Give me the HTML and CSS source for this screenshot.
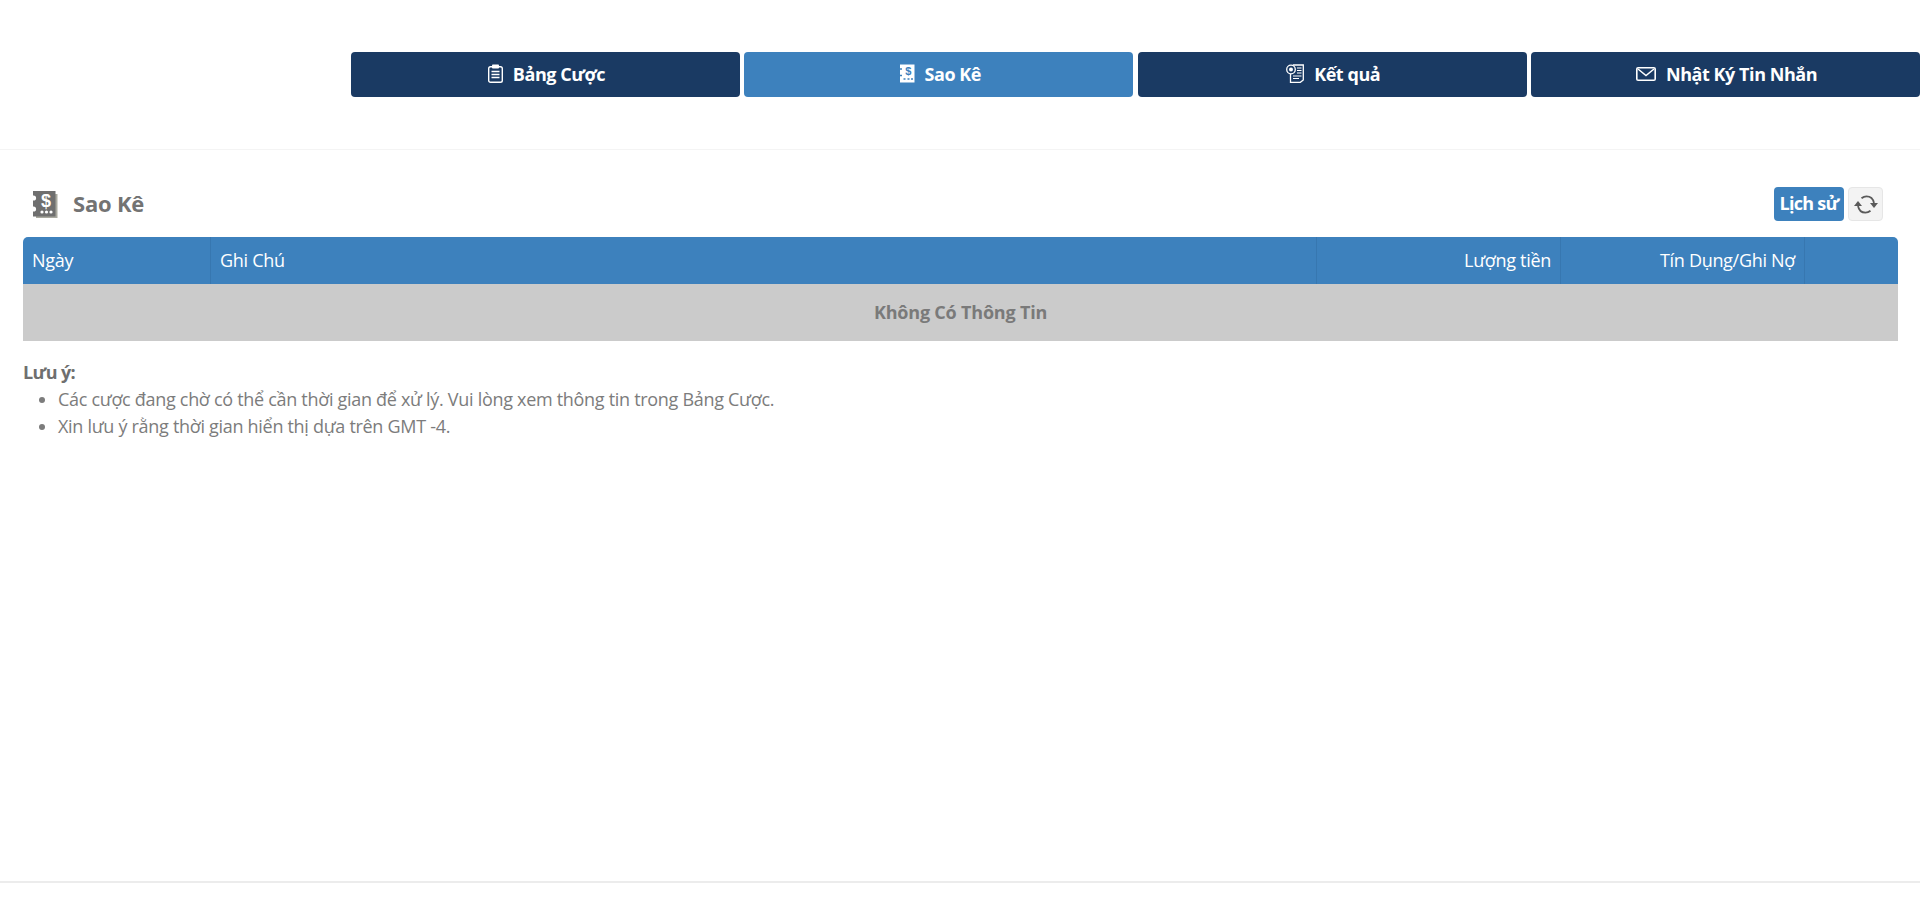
FILE: index.html
```html
<!DOCTYPE html>
<html lang="vi">
<head>
<meta charset="utf-8">
<title>Sao Kê</title>
<link rel="stylesheet" href="styles.css">
</head>
<body>
<header class="topbar">
  <nav class="tabs">
    <a class="tab"><svg class="tab-icon icon-board" viewBox="0 0 15 19"><rect x="0.700" y="2.700" width="13.600" height="15.600" rx="1.800" fill="none" stroke="#fff" stroke-width="1.400"/><rect x="4" y="0.500" width="7" height="4" rx="0.800" fill="#fff"/><path d="M3.500 7.500h8M3.500 10.500h8M3.500 13.500h8" stroke="#fff" stroke-width="1.500"/></svg>Bảng Cược</a>
    <a class="tab active"><svg class="tab-icon icon-statement" viewBox="0 0 16 19"><path d="M1 0.500h14.500v18H1z" fill="#fff"/><path d="M0 5h3M0 11.500h3" stroke="#3d81bd" stroke-width="1.500"/><text x="9" y="11" class="sym sym-blue">$</text><path d="M4.500 15h2M8.500 15h2M12 15h2" stroke="#3d81bd" stroke-width="1.500"/></svg>Sao Kê</a>
    <a class="tab"><svg class="tab-icon icon-result" viewBox="0 0 18 19"><path d="M7 1h10.300v15l-3 2.300H4.500V10" fill="none" stroke="#fff" stroke-width="1.300"/><circle cx="5" cy="5.500" r="4.300" fill="#1a3a63" stroke="#fff" stroke-width="1.300"/><circle cx="5" cy="5.500" r="2" fill="#fff"/><path d="M11 4h4.500M11 6.500h4.500M11 9h4.500M7 12h8.500M7 14.500h6" stroke="#fff" stroke-width="1.200"/></svg>Kết quả</a>
    <a class="tab"><svg class="tab-icon icon-mail" viewBox="0 0 20 14"><rect x="0.800" y="0.800" width="18.400" height="12.400" rx="1.300" fill="none" stroke="#fff" stroke-width="1.600"/><path d="M2 2l8 6.500L18 2" fill="none" stroke="#fff" stroke-width="1.500"/></svg>Nhật Ký Tin Nhắn</a>
  </nav>
</header>
<main class="content">
  <div class="title-row">
    <h1 class="title"><svg class="title-icon" viewBox="0 0 25 27"><path d="M22 3h2.500v24H3v-2h19z" fill="#a9a99f"/><rect width="22.500" height="25.500" fill="#6f6f6f"/><circle cx="0.500" cy="7" r="2.600" fill="#fff"/><circle cx="0.500" cy="18" r="2.600" fill="#fff"/><text x="13" y="16" class="sym sym-white">$</text><circle cx="9" cy="21" r="1.600" fill="#fff"/><circle cx="13.500" cy="21" r="1.600" fill="#fff"/><circle cx="18" cy="21" r="1.600" fill="#fff"/></svg><span class="title-text">Sao Kê</span></h1>
    <div class="actions">
      <button class="btn-history">Lịch sử</button>
      <button class="btn-refresh" aria-label="Làm mới"><svg viewBox="0 0 24 19" class="refresh-icon"><path d="M7.500 3.200C9 2 10.700 1.300 12.500 1.300c3.800 0 6.700 2.700 7.500 6.700" fill="none" stroke="#5a5a5a" stroke-width="1.800"/><path d="M16 8h8l-4 5z" fill="#5a5a5a"/><path d="M16.500 15.800C15 17 13.300 17.700 11.500 17.700c-3.800 0-6.700-2.700-7.500-6.700" fill="none" stroke="#5a5a5a" stroke-width="1.800"/><path d="M0 11h8L4 6z" fill="#5a5a5a"/></svg></button>
    </div>
  </div>
  <table class="statement">
    <thead>
      <tr>
        <th class="col-date">Ngày</th>
        <th class="col-note">Ghi Chú</th>
        <th class="col-amount num">Lượng tiền</th>
        <th class="col-credit num">Tín Dụng/Ghi Nợ</th>
        <th class="col-end"></th>
      </tr>
    </thead>
    <tbody>
      <tr><td class="empty" colspan="5">Không Có Thông Tin</td></tr>
    </tbody>
  </table>
  <section class="notes">
    <strong class="notes-title">Lưu ý:</strong>
    <ul class="notes-list">
      <li>Các cược đang chờ có thể cần thời gian để xử lý. Vui lòng xem thông tin trong Bảng Cược.</li>
      <li>Xin lưu ý rằng thời gian hiển thị dựa trên GMT -4.</li>
    </ul>
  </section>
</main>
<footer class="footer"></footer>
</body>
</html>
```
FILE: styles.css
```css
* { box-sizing: border-box; }
html, body { height: 100%; }
body {
  margin: 0;
  height: 906px;
  overflow: hidden;
  background: #fff;
  color: #6f6f6f;
  font-family: "Open Sans", "Noto Sans", sans-serif;
  font-size: 16px;
  display: flex;
  flex-direction: column;
}
.topbar {
  height: 150px;
  padding: 52px 0 0 351px;
  border-bottom: 1px solid #f4f4f4;
  flex: none;
}
.tabs { display: flex; gap: 4.500px; }
.tab {
  flex: 1 1 0;
  height: 45px;
  padding: 0 0 2px 2px;
  background: #1a3a63;
  color: #fff;
  border-radius: 4px;
  display: flex;
  align-items: center;
  justify-content: center;
  gap: 10px;
  font-weight: 700;
  font-size: 18px;
  letter-spacing: -0.45px;
}
.tab.active { background: #3d81bd; }
.icon-board { width: 15px; height: 19px; }
.icon-statement { width: 16px; height: 19px; }
.icon-result { width: 18px; height: 19px; }
.icon-mail { width: 20px; height: 14px; }
.sym { font-family: "Liberation Sans", sans-serif; font-weight: 700; text-anchor: middle; }
.sym-blue { fill: #3d81bd; font-size: 11px; }
.sym-white { fill: #fff; font-size: 18px; }
.content { flex: 1; padding: 0 22px 0 23px; }
.title-row {
  height: 87px;
  display: flex;
  align-items: center;
  justify-content: space-between;
  padding-top: 21px;
  padding-right: 15px;
}
.title {
  margin: 0;
  display: flex;
  align-items: center;
  gap: 15px;
  font-size: 22px;
  font-weight: 700;
  color: #737373;
  letter-spacing: -0.2px;
  padding-left: 10px;
}
.title-text { margin-top: -2px; }
.title-icon { width: 25px; height: 27px; }
.actions { display: flex; gap: 4px; }
.btn-history {
  height: 34px;
  width: 70px;
  padding: 0 0 2px;
  border: 0;
  border-radius: 4px;
  background: #3d81bd;
  color: #fff;
  font: 700 18px "Open Sans", "Noto Sans", sans-serif;
  letter-spacing: -0.7px;
}
.btn-refresh {
  width: 35px;
  height: 34px;
  padding: 0;
  border: 1px solid #e6e6e6;
  border-radius: 4px;
  background: #f3f3f3;
  display: flex;
  align-items: center;
  justify-content: center;
}
.refresh-icon { width: 24px; height: 19px; }
.statement {
  width: 100%;
  border-collapse: separate;
  border-spacing: 0;
  table-layout: fixed;
}
.statement th {
  height: 47px;
  padding: 0 9px 1px;
  background: #3d81bd;
  color: #fff;
  font-weight: 400;
  font-size: 18px;
  letter-spacing: -0.3px;
  text-align: left;
  border-right: 1px solid #3777b0;
}
.statement th:first-child { border-top-left-radius: 5px; }
.statement th:last-child { border-top-right-radius: 5px; border-right: 0; }
.statement th.num { text-align: right; }
.col-date { width: 188px; }
.col-amount { width: 244px; }
.col-credit { width: 244px; }
.col-end { width: 93px; }
.statement .col-date { padding-left: 9px; }
.empty {
  height: 57px;
  padding: 0 0 2px;
  background: #cbcbcb;
  color: #7a7a7a;
  font-weight: 700;
  font-size: 18px;
  letter-spacing: -0.2px;
  text-align: center;
}
.notes { margin-top: 18px; font-size: 18px; letter-spacing: -0.3px; line-height: 27px; color: #7c7c7c; }
.notes-title { display: block; font-weight: 700; color: #6f6f6f; letter-spacing: -0.6px; }
.notes-list { margin: 0; padding: 0 0 0 35px; }
.footer { height: 25px; flex: none; border-top: 2px solid #ececec; margin-top: auto; }
```
